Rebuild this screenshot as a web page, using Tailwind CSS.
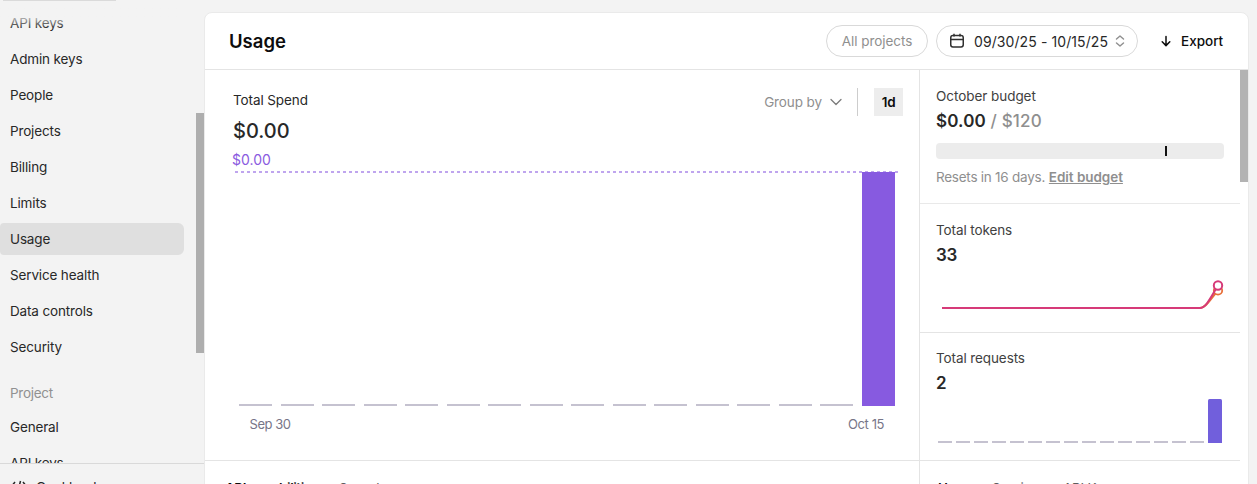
<!DOCTYPE html>
<html lang="en">
<head>
<meta charset="utf-8">
<title>Usage</title>
<script src="https://cdn.jsdelivr.net/npm/@tailwindcss/browser@4"></script>
</head>
<body class="h-[484px] w-[1257px] overflow-hidden bg-[#f3f3f3] font-['Inter','Liberation_Sans',sans-serif] text-[13.5px] text-[#282828]">
<div class="flex h-full">
  <aside class="relative flex w-[204px] shrink-0 flex-col">
    <div class="flex h-[463px] overflow-hidden">
      <div class="w-[184px] shrink-0">
        <div class="ml-[3px] h-px w-[113px] bg-[#dadada]"></div>
        <nav class="mt-1.5 flex flex-col gap-1 tracking-[-0.15px] *:flex *:h-8 *:shrink-0 *:items-center *:pt-px *:pl-2.5">
          <a>API keys</a>
          <a>Admin keys</a>
          <a>People</a>
          <a>Projects</a>
          <a>Billing</a>
          <a>Limits</a>
          <a class="rounded-r-md rounded-l bg-[#dfdfdf]">Usage</a>
          <a>Service health</a>
          <a>Data controls</a>
          <a>Security</a>
        </nav>
        <div class="mt-5 flex h-5 items-center pt-px pl-2.5 tracking-[-0.3px] text-[#919191]">Project</div>
        <nav class="mt-2 flex flex-col gap-1 tracking-[-0.15px] *:flex *:h-8 *:shrink-0 *:items-center *:pt-px *:pl-2.5">
          <a>General</a>
          <a>API keys</a>
        </nav>
      </div>
      <div class="mt-[113px] ml-3 h-[240px] w-2 bg-[#aeaeae]"></div>
    </div>
    <div class="flex h-[21px] gap-2 overflow-hidden border-t border-[#d9d9d9] pt-[13px] pl-2.5 leading-5">
      <svg class="mt-0.5 h-4 w-[18px] shrink-0" viewBox="0 0 18 16" fill="none" stroke="#282828" stroke-width="1.5"><path d="M5 3 1 8l4 5M13 3l4 5-4 5M10.500 2 7.500 14"/></svg>
      <span class="tracking-[-0.1px]">Cookbook</span>
    </div>
    <div class="absolute top-[1px] left-0 h-7 w-[184px] bg-linear-to-b from-[#f3f3f3] from-40% to-[#f3f3f3]/0"></div>
  </aside>

  <main class="mt-3 flex h-[480px] w-[1045px] shrink-0 flex-col overflow-hidden rounded-lg border border-[#eaeaea] bg-white">
    <header class="flex h-[57px] shrink-0 items-center border-b border-[#e4e4e4] pl-6">
      <h1 class="pt-0.5 text-[18.5px] font-semibold text-[#0d0d0d]">Usage</h1>
      <div class="ml-auto flex items-center">
        <button class="flex h-8 w-[102px] items-center justify-center rounded-full border border-[#d9d9d9] pt-px text-[#8f8f8f]"><span class="tracking-[-0.05px]">All projects</span></button>
        <button class="ml-2 flex h-8 w-[202px] items-center rounded-full border border-[#d9d9d9] pl-3">
          <svg class="size-4 shrink-0" viewBox="0 0 16 16" fill="none" stroke="#303030" stroke-width="1.500"><rect x="1.750" y="2.500" width="12.500" height="11.500" rx="2.200"/><path d="M1.750 6.500h12.500M5 .8v2.700M11 .8v2.700"/></svg>
          <span class="ml-[9px] w-[135px] pt-px text-left text-sm tracking-[0.09px] whitespace-nowrap">09/30/25 - 10/15/25</span>
          <svg class="ml-1.5 h-3 w-2.5" viewBox="0 0 10 12" fill="none" stroke="#8f8f8f" stroke-width="1.400" stroke-linecap="round" stroke-linejoin="round"><path d="M1.500 4 5 .9 8.500 4M1.500 8 5 11.100 8.500 8"/></svg>
        </button>
        <button class="ml-[22px] flex h-8 w-[88px] items-center text-[#0d0d0d]">
          <svg class="h-3 w-3" viewBox="0 0 12 12" fill="none" stroke="#0d0d0d" stroke-width="1.500" stroke-linecap="round" stroke-linejoin="round"><path d="M6 1.500v9M2.200 6.800 6 10.600l3.800-3.800"/></svg>
          <span class="ml-[9px] pt-px font-medium">Export</span>
        </button>
      </div>
    </header>

    <div class="flex min-h-0 flex-1">
      <section class="w-[715px] shrink-0 border-r border-[#e4e4e4]">
        <div class="flex h-[390px] flex-col">
          <div class="flex h-[78px] shrink-0">
            <div class="pt-5 pl-7">
              <div class="leading-5 tracking-[-0.1px]">Total Spend</div>
              <div class="mt-[7px] text-[20px] leading-7 font-medium">$0.00</div>
            </div>
            <div class="mt-[18px] mr-4 ml-auto flex h-7 items-center">
              <span class="pt-px tracking-[-0.1px] text-[#8f8f8f]">Group by</span>
              <svg class="ml-2 h-3 w-3" viewBox="0 0 12 12" fill="none" stroke="#7c7c7c" stroke-width="1.300" stroke-linecap="round" stroke-linejoin="round"><path d="M1 3.500 6 8.500l5-5"/></svg>
              <div class="ml-[15px] h-7 w-px bg-[#cdcdcd]"></div>
              <div class="ml-4 flex h-7 w-[29px] items-center justify-center bg-[#ededed] pt-px font-semibold tracking-[-0.3px] text-[#0d0d0d]">1d</div>
            </div>
          </div>
          <svg class="h-[312px] w-[714px]" viewBox="205 148 714 312">
            <text x="232" y="165" font-size="14" fill="#8a5be0">$0.00</text>
            <path d="M235 172H898" stroke="#bfa5ee" stroke-width="2" stroke-dasharray="3 3"/>
            <path fill="#c5c2d0" d="M239 404h33v2h-33zM281 404h33v2h-33zM322 404h33v2h-33zM364 404h33v2h-33zM405 404h33v2h-33zM447 404h33v2h-33zM488 404h33v2h-33zM530 404h33v2h-33zM571 404h33v2h-33zM613 404h33v2h-33zM654 404h33v2h-33zM696 404h33v2h-33zM737 404h33v2h-33zM779 404h33v2h-33zM820 404h33v2h-33z"/>
            <path fill="#875ae0" d="M862 172h33v234h-33z"/>
            <text x="249.500" y="429" font-size="13" fill="#777588" textLength="41.500">Sep 30</text>
            <text x="848" y="429" font-size="13" fill="#777588" textLength="36.500">Oct 15</text>
          </svg>
        </div>
        <div class="flex border-t border-[#e4e4e4] pt-[17px] pl-5 leading-5">
          <span class="w-[114px] font-semibold tracking-[-0.45px] text-[#0d0d0d]">API capabilities</span>
          <span class="tracking-[-0.1px] text-[#5d5d5d]">Spend</span>
        </div>
      </section>

      <section class="w-[320px] shrink-0 text-[#414141]">
        <div class="h-[134px] border-b border-[#e9e9e9] pt-4 pl-4">
          <div class="leading-5 tracking-[-0.05px]">October budget</div>
          <div class="mt-[3px] text-[17px] leading-6 font-medium tracking-[0.15px] text-[#8f8f8f]"><span class="font-semibold text-[#282828]">$0.00</span> / $120</div>
          <div class="mt-[10px] h-4 w-[288px] rounded bg-[#ececec] pt-[3px] pl-[229px]"><div class="h-2.5 w-0.5 bg-[#111]"></div></div>
          <div class="mt-2 leading-5 whitespace-nowrap text-[#8f8f8f]"><span class="tracking-[-0.25px]">Resets in 16 days.</span> <a class="font-semibold tracking-[-0.05px] underline">Edit budget</a></div>
        </div>
        <div class="h-[129px] border-b border-[#e4e4e4] pt-4 pl-4">
          <div class="leading-5 tracking-[-0.1px]">Total tokens</div>
          <div class="mt-[3px] text-[17px] leading-6 font-semibold tracking-[-0.2px] text-[#282828]">33</div>
          <svg class="mt-2 h-[50px] w-[300px]" viewBox="936 275 300 50" fill="none" stroke-width="2">
            <path stroke="#e8703a" d="M942 308H1200C1206 308 1211 298 1218 290.500"/>
            <circle cx="1218" cy="290.500" r="4.200" stroke="#e8703a" stroke-width="1.800" fill="#fff"/>
            <path stroke="#d63a78" d="M942 308H1200C1206 308 1211 297 1218 285.500"/>
            <circle cx="1218" cy="285.500" r="4.200" stroke="#d63a78" stroke-width="2" fill="#fff"/>
          </svg>
        </div>
        <div class="h-[128px] border-b border-[#e4e4e4] pt-[15px] pl-4">
          <div class="leading-5 tracking-[-0.1px]">Total requests</div>
          <div class="mt-[3px] text-[17px] leading-6 font-semibold text-[#282828]">2</div>
          <svg class="h-[55px] w-[300px]" viewBox="936 395 300 55">
            <path stroke="#c5c2d0" stroke-width="2" stroke-dasharray="14 4" d="M938 442H1204"/>
            <path fill="#715fdc" d="M1208 443V400.500q0-1.500 1.500-1.500h11q1.500 0 1.500 1.500V443z"/>
          </svg>
        </div>
        <div class="flex pt-[17px] pl-[18px] leading-5 tracking-[-0.2px] whitespace-nowrap">
          <span class="w-[54px] font-semibold text-[#0d0d0d]">Users</span>
          <span class="w-[71px] text-[#5d5d5d]">Services</span>
          <span class="text-[#5d5d5d]">API Keys</span>
        </div>
      </section>
      <div class="h-[112px] w-2 shrink-0 bg-[#b3b3b3]"></div>
    </div>
  </main>
</div>
</body>
</html>
